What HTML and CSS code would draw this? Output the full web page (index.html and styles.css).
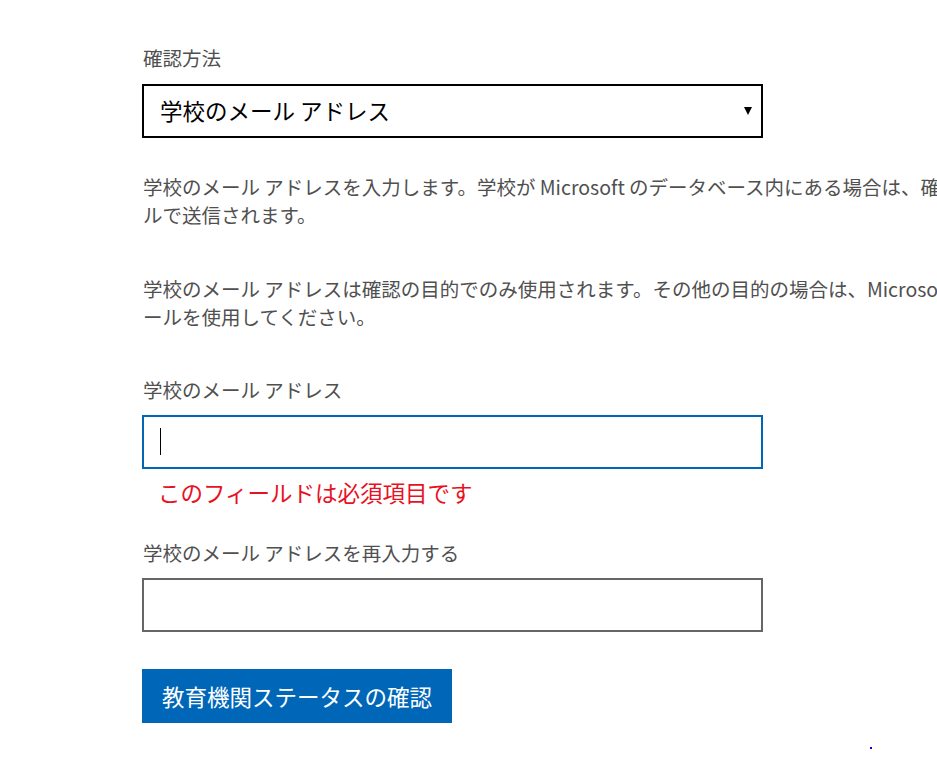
FILE: index.html
```html
<!DOCTYPE html>
<html lang="ja">
<head>
    <meta charset="UTF-8">
    <meta name="viewport" content="width=device-width, initial-scale=1.0">
    <title>教育機関ステータスの確認</title>
    <link rel="stylesheet" href="styles.css">
</head>
<body>
    <div class="container">
        <label class="field-label" for="method">確認方法</label>
        <div class="select-wrap">
            <select id="method" class="select">
                <option>学校のメール アドレス</option>
                <option>ドキュメントのアップロード</option>
            </select>
        </div>

        <p class="note">学校のメール アドレスを入力します。学校が Microsoft のデータベース内にある場合は、確認コードがメールで送信されます。</p>
        <p class="note">学校のメール アドレスは確認の目的でのみ使用されます。その他の目的の場合は、Microsoft 以外の個人メールを使用してください。</p>

        <label class="field-label" for="email">学校のメール アドレス</label>
        <div class="input-wrap focused">
            <input id="email" class="text-input active" type="email">
        </div>
        <div class="error">このフィールドは必須項目です</div>

        <label class="field-label" for="email2">学校のメール アドレスを再入力する</label>
        <div class="input-wrap">
            <input id="email2" class="text-input" type="email">
        </div>

        <button class="submit">教育機関ステータスの確認</button>
    </div>
    <span class="dot"></span>
</body>
</html>
```

FILE: styles.css
```css
:root {
    --text-color: #505050;
    --blue: #0067b8;
    --red: #e81123;
}

html {
    overflow: hidden;
}

body {
    margin: 0;
    font-family: "Noto Sans CJK JP", "Noto Sans", sans-serif;
    color: var(--text-color);
    background: #fff;
}

.container {
    display: flex;
    flex-direction: column;
    align-items: flex-start;
    padding: 44px 0 0 142px;
}

.field-label {
    display: block;
    font-size: 19.5px;
    line-height: 28px;
    padding-left: 1px;
}

.select-wrap {
    position: relative;
    margin-top: 12px;
}

.select {
    appearance: none;
    -webkit-appearance: none;
    box-sizing: border-box;
    width: 621px;
    height: 54px;
    padding: 0 40px 2px 16px;
    border: 2px solid #000;
    border-radius: 0;
    background: #fff;
    color: #000;
    font-family: inherit;
    font-size: 22.5px;
    outline: none;
}

.select-wrap::after {
    content: '';
    position: absolute;
    right: 11px;
    top: 23px;
    border-left: 4px solid transparent;
    border-right: 4px solid transparent;
    border-top: 8px solid #000;
}

.note {
    width: 937px;
    margin: 35px 0 0;
    font-size: 19.5px;
    line-height: 28px;
    padding-left: 1px;
}

.note + .note {
    margin-top: 46px;
}

.note + .field-label {
    margin-top: 45px;
}

.input-wrap {
    position: relative;
    margin-top: 11px;
}

.text-input {
    box-sizing: border-box;
    width: 621px;
    height: 54px;
    padding: 0 16px;
    border: 2px solid #666;
    border-radius: 0;
    font-family: inherit;
    font-size: 19.5px;
    outline: none;
}

.text-input.active {
    border-color: var(--blue);
}

.input-wrap.focused::after {
    content: '';
    position: absolute;
    left: 18px;
    top: 13px;
    width: 1px;
    height: 27px;
    background: #000;
}

.error {
    margin-top: 8px;
    padding-left: 16px;
    font-size: 22.5px;
    line-height: 30px;
    color: var(--red);
}

.error + .field-label {
    margin-top: 32px;
}

.submit {
    margin-top: 37px;
    height: 54px;
    padding: 0 20px;
    border: none;
    border-radius: 0;
    background-color: var(--blue);
    color: #fff;
    font-family: inherit;
    font-size: 22.5px;
    cursor: pointer;
}

.dot {
    position: absolute;
    left: 870px;
    top: 747px;
    width: 2px;
    height: 2px;
    background: #0000ff;
}
```
